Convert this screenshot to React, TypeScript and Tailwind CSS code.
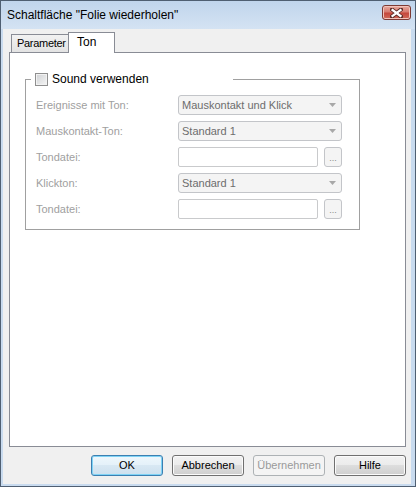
import React from "react";

const sans = "font-['Liberation_Sans',Arial,sans-serif]";

function Combo({ value }: { value: string }) {
  return (
    <div className="flex h-[20px] w-[164px] items-center justify-between rounded-[3px] border border-[#c3c5c9] bg-[#f4f4f4] pl-[3px] pr-[5px] text-[#6d6d6d]">
      <span>{value}</span>
      <svg width="7" height="4" viewBox="0 0 7 4">
        <path d="M0 0h7L3.5 4z" fill="#a8a8a8" />
      </svg>
    </div>
  );
}

function FileInput() {
  return (
    <div className="flex gap-[6px]">
      <div className="h-[20px] w-[140px] rounded-[2px] border border-[#c9cacc] bg-white" />
      <div className="flex h-[20px] w-[18px] items-end justify-center rounded-[3px] border border-[#c3c5c9] bg-[#f4f4f4] pb-[3px] text-[9px] leading-none text-[#8a8a8a]">
        ...
      </div>
    </div>
  );
}

function Row({ label, children }: { label: string; children: React.ReactNode }) {
  return (
    <div className="flex h-[20px] items-center">
      <span className="w-[142px] text-[#a0a0a0]">{label}</span>
      {children}
    </div>
  );
}

function Btn({
  children,
  kind = "normal",
}: {
  children: React.ReactNode;
  kind?: "normal" | "default" | "disabled";
}) {
  const look =
    kind === "default"
      ? "border-[#3c7fb1] bg-[linear-gradient(#eef7fc,#e4f1f9_50%,#d8e8f3_50%,#cde0ee)] shadow-[inset_0_0_0_1px_#7fd3f5] text-black"
      : kind === "disabled"
        ? "border-[#adb2b5] bg-[#f4f4f4] text-[#9a9a9a]"
        : "border-[#707070] bg-[linear-gradient(#f2f2f2,#ebebeb_50%,#dddddd_50%,#cfcfcf)] shadow-[inset_0_0_0_1px_#fbfbfb] text-black";
  return (
    <div
      className={`flex h-[21px] w-[72px] items-center justify-center rounded-[3px] border ${look}`}
    >
      {children}
    </div>
  );
}

export default function App() {
  return (
    <div
      className={`${sans} flex h-[487px] w-[416px] flex-col border border-[#4f5f72] bg-[#c9dbef] text-[11px] text-black`}
    >
      {/* Title bar */}
      <div className="flex h-[28px] shrink-0 items-start justify-between bg-[linear-gradient(#c0d5ec,#d4e3f3)] pl-[6px] pr-[4px] text-[12px]">
        <span className="pt-[7px] leading-[14px]">Schaltfläche "Folie wiederholen"</span>
        <div className="mt-[4px] flex h-[15px] w-[29px] items-center justify-center rounded-[3px] border border-[#7d3a34] bg-[linear-gradient(#e8aa9f,#d77b6f_45%,#c5483c_55%,#d26a59)] shadow-[inset_0_0_0_1px_#f1c3ba]">
          <svg width="13" height="10" viewBox="0 0 13 10">
            <path d="M2 1.5L11 8.5M11 1.5L2 8.5" stroke="#5a2a26" strokeWidth="4" strokeLinecap="square" />
            <path d="M2.5 2L10.5 8M10.5 2L2.5 8" stroke="#ffffff" strokeWidth="2.2" strokeLinecap="square" />
          </svg>
        </div>
      </div>

      {/* Client area */}
      <div className="mb-[2px] ml-[2px] mr-[4px] flex flex-1 flex-col bg-[#f0f0f0]">
        {/* Tabs */}
        <div className="ml-[8px] mt-[3px] flex h-[20px] items-end">
          <div className="flex h-[18px] w-[58px] items-center border border-b-0 border-[#898c95] bg-[linear-gradient(#f2f2f2,#e3e3e3)] pl-[5px] leading-none tracking-[-0.3px]">
            Parameter
          </div>
          <div className="relative z-10 -mb-[1px] -ml-[1px] h-[21px] w-[47px] border border-b-0 border-[#898c95] bg-white pl-[8px] pt-[3px] text-[12px] leading-none">
            Ton
          </div>
        </div>

        {/* Panel */}
        <div className="ml-[6px] mr-[5px] flex h-[395px] flex-col border border-[#898c95] bg-white">
          <fieldset className="ml-[15px] mt-[19px] w-[335px] border border-[#a0a0a0] pb-[10px] pl-[5px] pt-[9px]">
            <legend className="flex h-[14px] w-[202px] items-center pl-[4px]">
              <span className="h-[13px] w-[13px] border border-[#8f8f8f] bg-[linear-gradient(135deg,#cfd1d4,#f5f5f5)] shadow-[inset_0_0_0_1px_#f2f2f2]" />
              <span className="ml-[4px] text-[12px] leading-none">Sound verwenden</span>
            </legend>
            <div className="ml-[5px] flex flex-col gap-[6px]">
              <Row label="Ereignisse mit Ton:">
                <Combo value="Mauskontakt und Klick" />
              </Row>
              <Row label="Mauskontakt-Ton:">
                <Combo value="Standard 1" />
              </Row>
              <Row label="Tondatei:">
                <FileInput />
              </Row>
              <Row label="Klickton:">
                <Combo value="Standard 1" />
              </Row>
              <Row label="Tondatei:">
                <FileInput />
              </Row>
            </div>
          </fieldset>
        </div>

        {/* Buttons */}
        <div className="mr-[5px] mt-[8px] flex justify-end gap-[9px]">
          <Btn kind="default">OK</Btn>
          <Btn>Abbrechen</Btn>
          <Btn kind="disabled">Übernehmen</Btn>
          <Btn>Hilfe</Btn>
        </div>
      </div>
    </div>
  );
}
